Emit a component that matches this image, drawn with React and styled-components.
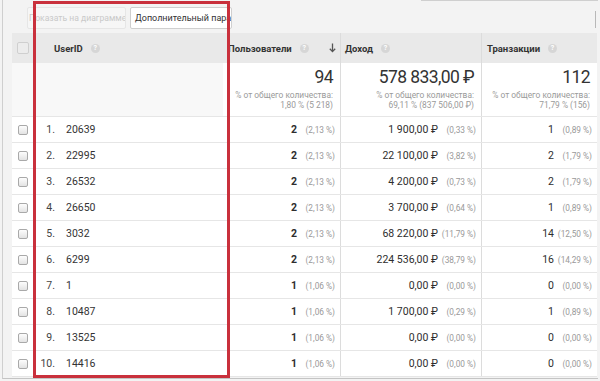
import styled, { createGlobalStyle } from "styled-components";

const Global = createGlobalStyle`
  html, body {
    margin: 0;
    padding: 0;
    background: #f3f3f3;
    font-family: Roboto, "Liberation Sans", Arial, sans-serif;
    color: #333;
  }
`;

const Page = styled.div`
  position: relative;
  width: 600px;
  height: 381px;
  overflow: hidden;
`;

const Frame = styled.div`
  margin-left: 2px;
  width: 595px;
  border-left: 1px solid #cfcfcf;
  border-bottom: 1px solid #c4c4c4;
  padding-bottom: 1px;
`;

const TopLine = styled.div`
  height: 1px;
  margin-left: 418px;
  background: #cfcfcf;
`;

const Toolbar = styled.div`
  height: 32px;
  display: flex;
  align-items: flex-start;
  gap: 4px;
  padding: 6px 0 0 24px;
  box-sizing: border-box;
`;

const ToolButton = styled.div`
  height: 22px;
  box-sizing: border-box;
  padding: 0 ${(p) => (p.disabled ? 1 : 4)}px;
  display: flex;
  align-items: center;
  font-size: ${(p) => (p.disabled ? 8.6 : 9)}px;
  color: ${(p) => (p.disabled ? "#c9c9c9" : "#333")};
  background: ${(p) => (p.disabled ? "#f6f6f6" : "#fff")};
  border: 1px solid ${(p) => (p.disabled ? "#e6e6e6" : "#cfcfcf")};
  border-radius: 2px;
  white-space: nowrap;
  overflow: hidden;
  width: ${(p) => p.w}px;
`;

const EdgeMark = styled.div`
  margin-left: auto;
  margin-top: 4px;
  width: 2px;
  height: 17px;
  border-left: 1px solid #b8b8b8;
`;

const Table = styled.div`
  margin-left: 9px;
  width: 585px;
  background: #fff;
`;

const Row = styled.div`
  display: grid;
  grid-template-columns: 21px 190px 118px 141px 115px;
  height: ${(p) => p.h}px;
  box-sizing: border-box;
  border-bottom: ${(p) => (p.head ? "none" : "1px solid #e6e6e6")};
  background: ${(p) => (p.head ? "#e9e9e9" : "#fff")};
`;

const Cell = styled.div`
  display: flex;
  align-items: center;
  justify-content: ${(p) => (p.right ? "flex-end" : "flex-start")};
  padding: ${(p) => p.pad || "0 6px 0 5px"};
  box-sizing: border-box;
  border-right: ${(p) => (p.divider ? "1px solid #dcdcdc" : "none")};
  white-space: nowrap;
  min-width: 0;
`;

const HeadLabel = styled.span`
  font-size: 9.5px;
  font-weight: 700;
  color: #333;
`;

const Help = styled.span`
  display: inline-flex;
  align-items: center;
  justify-content: center;
  width: 9px;
  height: 9px;
  margin-left: 8px;
  border-radius: 50%;
  background: #d6d6d6;
  color: #fff;
  font-size: 7px;
  font-weight: 700;
`;

const SortIcon = styled.svg`
  margin-left: auto;
  margin-right: 1px;
  width: 7px;
  height: 10px;
`;

const Check = styled.span`
  width: ${(p) => (p.big ? 10 : 8)}px;
  height: ${(p) => (p.big ? 10 : 8)}px;
  border: 1px solid ${(p) => (p.big ? "#cfcfcf" : "#a9a9a9")};
  border-radius: 2px;
  background: ${(p) =>
    p.big ? "#ececec" : "linear-gradient(#fdfdfd, #e3e3e3)"};
  margin: 0 auto;
`;

const Summary = styled.div`
  display: flex;
  flex-direction: column;
  align-items: flex-end;
  justify-content: flex-start;
  padding: 4px 7px 0 5px;
  box-sizing: border-box;
  border-right: ${(p) => (p.divider ? "1px solid #dcdcdc" : "none")};
  background: ${(p) => (p.shade ? "#f8f8f8" : "#fff")};
`;

const Big = styled.div`
  font-size: 17.5px;
  font-weight: 400;
  line-height: 21px;
  color: #333;
  letter-spacing: -0.6px;
`;

const Sub = styled.div`
  font-size: 8.4px;
  line-height: 10px;
  color: #9a9a9a;
  text-align: right;
  margin-top: ${(p) => (p.first ? "2px" : "0")};
`;

const Index = styled.span`
  width: 22px;
  text-align: right;
  font-size: 10.5px;
  color: #444;
`;

const IdText = styled.span`
  margin-left: 11px;
  font-size: 10.5px;
  color: #333;
`;

const Value = styled.span`
  font-size: 10.5px;
  font-weight: ${(p) => (p.bold ? 700 : 400)};
  color: #2e2e2e;
`;

const Pct = styled.span`
  width: 38px;
  text-align: right;
  font-size: 8.3px;
  color: #999;
`;

const Overlay = styled.div`
  position: absolute;
  left: 33px;
  top: 1px;
  width: 197px;
  height: 377px;
  box-sizing: border-box;
  border: 3px solid #c9303c;
  pointer-events: none;
`;

const rows = [
  ["20639", "2", "2,13", "1 900,00 ₽", "0,33", "1", "0,89"],
  ["22995", "2", "2,13", "22 100,00 ₽", "3,82", "2", "1,79"],
  ["26532", "2", "2,13", "4 200,00 ₽", "0,73", "2", "1,79"],
  ["26650", "2", "2,13", "3 700,00 ₽", "0,64", "1", "0,89"],
  ["3032", "2", "2,13", "68 220,00 ₽", "11,79", "14", "12,50"],
  ["6299", "2", "2,13", "224 536,00 ₽", "38,79", "16", "14,29"],
  ["1", "1", "1,06", "0,00 ₽", "0,00", "0", "0,00"],
  ["10487", "1", "1,06", "1 700,00 ₽", "0,29", "1", "0,89"],
  ["13525", "1", "1,06", "0,00 ₽", "0,00", "0", "0,00"],
  ["14416", "1", "1,06", "0,00 ₽", "0,00", "0", "0,00"],
];

export default function App() {
  return (
    <Page>
      <Global />
      <Frame>
        <TopLine />
        <Toolbar>
          <ToolButton disabled w={99}>Показать на диаграмме</ToolButton>
          <ToolButton w={102}>Дополнительный параметр</ToolButton>
          <EdgeMark />
        </Toolbar>
        <Table>
          <Row head h={30}>
            <Cell pad="0">
              <Check big />
            </Cell>
            <Cell pad="0 0 0 21px">
              <HeadLabel>UserID</HeadLabel>
              <Help>?</Help>
            </Cell>
            <Cell divider pad="0 3px 0 5px">
              <HeadLabel>Пользователи</HeadLabel>
              <Help>?</Help>
              <SortIcon viewBox="0 0 7 10">
                <path d="M3.5 0.5 V8.5 M0.8 5.8 L3.5 8.6 L6.2 5.8" stroke="#555" strokeWidth="1.3" fill="none" />
              </SortIcon>
            </Cell>
            <Cell divider pad="0 5px 0 4px">
              <HeadLabel>Доход</HeadLabel>
              <Help>?</Help>
            </Cell>
            <Cell pad="0 5px">
              <HeadLabel>Транзакции</HeadLabel>
              <Help>?</Help>
            </Cell>
          </Row>

          <Row h={54}>
            <Summary shade />
            <Summary shade />
            <Summary divider>
              <Big>94</Big>
              <Sub first>% от общего количества:</Sub>
              <Sub>1,80 % (5 218)</Sub>
            </Summary>
            <Summary divider>
              <Big>578 833,00 ₽</Big>
              <Sub first>% от общего количества:</Sub>
              <Sub>69,11 % (837 506,00 ₽)</Sub>
            </Summary>
            <Summary>
              <Big>112</Big>
              <Sub first>% от общего количества:</Sub>
              <Sub>71,79 % (156)</Sub>
            </Summary>
          </Row>

          {rows.map((r, i) => (
            <Row key={i} h={26}>
              <Cell pad="0">
                <Check />
              </Cell>
              <Cell pad="0">
                <Index>{i + 1}.</Index>
                <IdText>{r[0]}</IdText>
              </Cell>
              <Cell right divider pad="0 5px 0 0">
                <Value bold>{r[1]}</Value>
                <Pct>({r[2]} %)</Pct>
              </Cell>
              <Cell right divider pad="0 5px 0 0">
                <Value>{r[3]}</Value>
                <Pct>({r[4]} %)</Pct>
              </Cell>
              <Cell right pad="0 5px 0 0">
                <Value>{r[5]}</Value>
                <Pct>({r[6]} %)</Pct>
              </Cell>
            </Row>
          ))}
        </Table>
      </Frame>
      <Overlay />
    </Page>
  );
}
